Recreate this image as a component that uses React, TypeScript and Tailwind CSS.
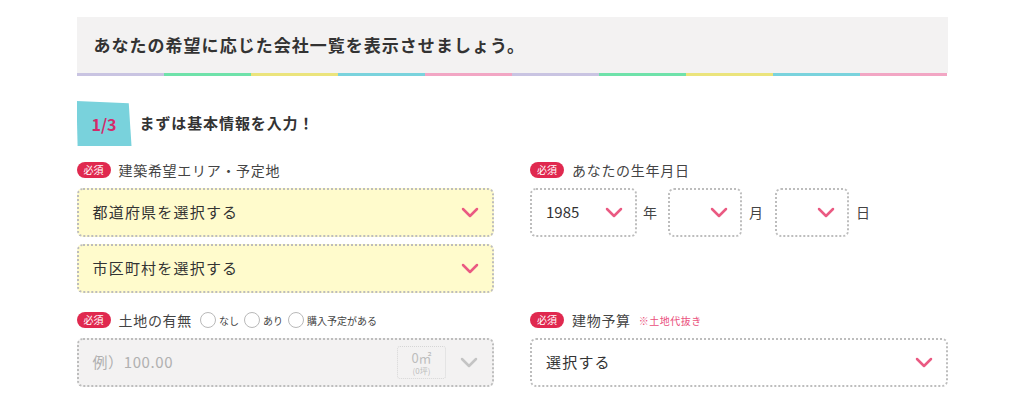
import React from "react";

const font = { fontFamily: '"Noto Sans CJK JP", "Noto Sans", sans-serif' };

function Chevron({ gray = false }: { gray?: boolean }) {
  return (
    <svg width="18" height="11" viewBox="0 0 18 11" fill="none">
      <path
        d="M2 2 L9 9 L16 2"
        stroke={gray ? "#c4c4c4" : "#ea5a82"}
        strokeWidth="2.5"
        strokeLinecap="round"
        strokeLinejoin="round"
      />
    </svg>
  );
}

function Required() {
  return (
    <span className="inline-flex h-[16px] w-[34px] items-center justify-center rounded-full bg-[#e0294f] text-[10px] leading-none text-white">
      必須
    </span>
  );
}

function Label({ children }: { children: React.ReactNode }) {
  return (
    <div className="flex h-[18px] items-center gap-2">
      <Required />
      {children}
    </div>
  );
}

function Radio({ text }: { text: string }) {
  return (
    <span className="flex items-center gap-[3px]">
      <span className="h-[16px] w-[16px] rounded-full border border-[#b9b9b9] bg-white" />
      <span className="text-[10px] text-[#444]">{text}</span>
    </span>
  );
}

const stripeColors = [
  "bg-[#c9c4e2]",
  "bg-[#6fe2aa]",
  "bg-[#ebe47c]",
  "bg-[#7ad3dd]",
  "bg-[#f2a6c4]",
  "bg-[#c9c4e2]",
  "bg-[#6fe2aa]",
  "bg-[#ebe47c]",
  "bg-[#7ad3dd]",
  "bg-[#f2a6c4]",
];

export default function App() {
  return (
    <div className="min-h-[406px] w-full bg-white" style={font}>
      <div className="mx-auto w-[871px] pt-[17px]">
        {/* header */}
        <div className="flex h-[56px] items-center bg-[#f3f2f2] pl-[17px]">
          <h1 className="text-[17px] font-bold tracking-[0.06em] text-[#333]">
            あなたの希望に応じた会社一覧を表示させましょう。
          </h1>
        </div>
        <div className="flex h-[3px]">
          {stripeColors.map((c, i) => (
            <div key={i} className={`flex-1 ${c}`} />
          ))}
        </div>

        {/* step */}
        <div className="mt-[25px] flex items-center gap-[8px]">
          <div className="flex h-[45px] w-[55px] items-center justify-center bg-[#79d2dc] [clip-path:polygon(0_0,95%_5%,100%_100%,2%_100%)]">
            <span className="text-[16px] font-bold text-[#d42a6a]">1/3</span>
          </div>
          <span className="text-[15px] font-bold tracking-[0.06em] text-[#333]">
            まずは基本情報を入力！
          </span>
        </div>

        {/* form grid */}
        <div className="mt-[15px] grid grid-cols-2 gap-x-9">
          {/* left col row 1 */}
          <div>
            <Label>
              <span className="text-[14px] tracking-[0.05em] text-[#444]">建築希望エリア・予定地</span>
            </Label>
            <div className="mt-[9px] flex h-[49px] items-center justify-between rounded-md border-2 border-dotted border-[#bdbdbd] bg-[#fffbcc] pl-[14px] pr-[13px]">
              <span className="text-[15px] tracking-[0.08em] text-[#333]">都道府県を選択する</span>
              <Chevron />
            </div>
            <div className="mt-[7px] flex h-[49px] items-center justify-between rounded-md border-2 border-dotted border-[#bdbdbd] bg-[#fffbcc] pl-[14px] pr-[13px]">
              <span className="text-[15px] tracking-[0.08em] text-[#333]">市区町村を選択する</span>
              <Chevron />
            </div>
          </div>

          {/* right col row 1 */}
          <div>
            <Label>
              <span className="text-[14px] tracking-[0.05em] text-[#444]">あなたの生年月日</span>
            </Label>
            <div className="mt-[9px] flex items-center">
              <div className="flex h-[49px] w-[107px] items-center justify-between rounded-md border-2 border-dotted border-[#bdbdbd] bg-white pl-[14px] pr-[12px]">
                <span className="text-[15px] text-[#333]">1985</span>
                <Chevron />
              </div>
              <span className="ml-[6px] mr-[11px] text-[14px] text-[#444]">年</span>
              <div className="flex h-[49px] w-[74px] items-center justify-end rounded-md border-2 border-dotted border-[#bdbdbd] bg-white pr-[12px]">
                <Chevron />
              </div>
              <span className="ml-[7px] mr-[12px] text-[14px] text-[#444]">月</span>
              <div className="flex h-[49px] w-[74px] items-center justify-end rounded-md border-2 border-dotted border-[#bdbdbd] bg-white pr-[12px]">
                <Chevron />
              </div>
              <span className="ml-[7px] text-[14px] text-[#444]">日</span>
            </div>
          </div>

          {/* left col row 2 */}
          <div className="mt-[18px]">
            <Label>
              <span className="text-[14px] tracking-[0.05em] text-[#444]">土地の有無</span>
              <span className="flex items-center gap-[5px]">
                <Radio text="なし" />
                <Radio text="あり" />
                <Radio text="購入予定がある" />
              </span>
            </Label>
            <div className="mt-[9px] flex h-[49px] items-center justify-between rounded-md border-2 border-dotted border-[#bdbdbd] bg-[#f3f2f2] pl-[14px] pr-[14px]">
              <span className="text-[15px] tracking-[0.04em] text-[#b0b0b0]">例）100.00</span>
              <div className="flex items-center gap-[14px]">
                <div className="flex h-[33px] w-[49px] flex-col items-center justify-center rounded-[3px] border border-dotted border-[#d6d6d6]">
                  <span className="text-[13px] leading-[14px] text-[#bdbdbd]">0㎡</span>
                  <span className="mt-[1px] text-[8px] leading-[9px] text-[#bdbdbd]">(0坪)</span>
                </div>
                <Chevron gray />
              </div>
            </div>
          </div>

          {/* right col row 2 */}
          <div className="mt-[18px]">
            <Label>
              <span className="text-[14px] tracking-[0.05em] text-[#444]">建物予算</span>
              <span className="text-[10px] tracking-[0.05em] text-[#ea4f7c]">※土地代抜き</span>
            </Label>
            <div className="mt-[9px] flex h-[49px] items-center justify-between rounded-md border-2 border-dotted border-[#bdbdbd] bg-white pl-[14px] pr-[13px]">
              <span className="text-[15px] tracking-[0.08em] text-[#333]">選択する</span>
              <Chevron />
            </div>
          </div>
        </div>
      </div>
    </div>
  );
}
